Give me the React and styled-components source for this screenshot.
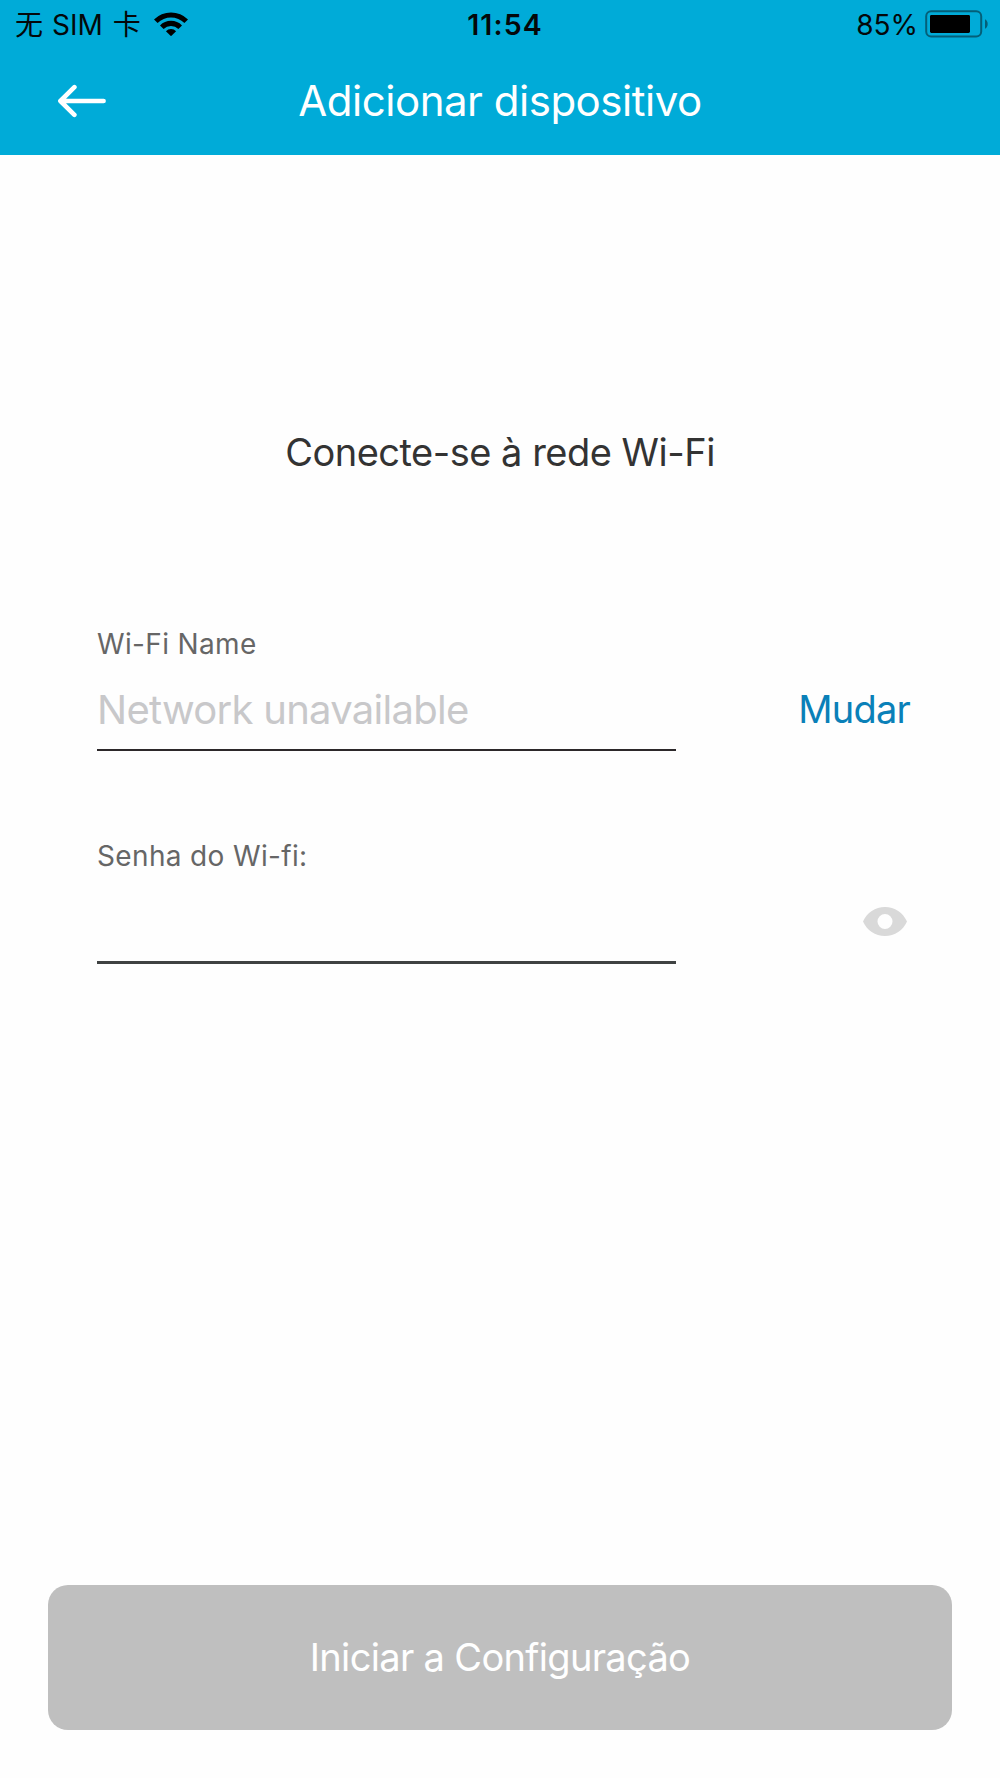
import styled, { createGlobalStyle } from 'styled-components';

export default function App() {
  return (
    <Screen>
      <GlobalStyle />
      <Header>
        <StatusBar>
          <Carrier>
            <Han>无</Han>
            <StatusText>SIM</StatusText>
            <Han>卡</Han>
            <WifiIcon />
          </Carrier>
          <Clock>11:54</Clock>
          <Power>
            <StatusText>85%</StatusText>
            <BatteryIcon />
          </Power>
        </StatusBar>
        <NavBar>
          <BackButton aria-label="Voltar">
            <ArrowIcon />
          </BackButton>
          <Title>Adicionar dispositivo</Title>
        </NavBar>
      </Header>
      <Content>
        <Heading>Conecte-se à rede Wi-Fi</Heading>
        <Field>
          <Label htmlFor="ssid">Wi-Fi Name</Label>
          <FieldRow $height={90}>
            <Input id="ssid" placeholder="Network unavailable" $line="2px solid #2c282a" />
            <ChangeButton>Mudar</ChangeButton>
          </FieldRow>
        </Field>
        <Field>
          <Label htmlFor="password">Senha do Wi-fi:</Label>
          <FieldRow $height={91}>
            <Input id="password" type="password" $line="3px solid #3f4242" />
            <EyeButton aria-label="Mostrar senha">
              <EyeIcon />
            </EyeButton>
          </FieldRow>
        </Field>
      </Content>
      <Footer>
        <SubmitButton>Iniciar a Configuração</SubmitButton>
      </Footer>
    </Screen>
  );
}

function WifiIcon() {
  return (
    <Wifi viewBox="0 0 34 24">
      <path d="M0 7.5A24 24 0 0 1 34 7.5L30.4 11.1A18.9 18.9 0 0 0 3.6 11.1Z" />
      <path d="M6 13.4A15.6 15.6 0 0 1 28 13.4L24.4 17A10.5 10.5 0 0 0 9.6 17Z" />
      <path d="M11.9 19.2A7.2 7.2 0 0 1 22.1 19.2L17 24.2Z" />
    </Wifi>
  );
}

function BatteryIcon() {
  return (
    <Battery viewBox="0 0 64 28">
      <rect x="1.2" y="1.2" width="55" height="25.4" rx="5" fill="none" stroke="#045f78" strokeWidth="2" />
      <rect x="5" y="5" width="40" height="18" rx="1.4" />
      <path d="M60 9.3C63.6 10.8 63.6 17.2 60 18.7Z" fill="#045f78" />
    </Battery>
  );
}

function ArrowIcon() {
  return (
    <Arrow viewBox="0 0 50 34">
      <path d="M17.4 3.2L3.4 17L17.4 30.8M3.4 17H46.6" />
    </Arrow>
  );
}

function EyeIcon() {
  return (
    <Eye viewBox="0 0 44 29">
      <path
        fillRule="evenodd"
        d="M0 14.5C3.8 5.8 12.3 0 22 0S40.2 5.8 44 14.5C40.2 23.2 31.7 29 22 29S3.8 23.2 0 14.5ZM22 7A7.5 7.5 0 1 0 22 22A7.5 7.5 0 1 0 22 7Z"
      />
    </Eye>
  );
}

const GlobalStyle = createGlobalStyle`
  body {
    margin: 0;
    background: #fefefe;
  }

  * {
    box-sizing: border-box;
  }

  button, input {
    font-family: inherit;
    font-weight: inherit;
    border: none;
    padding: 0;
    background: none;
  }
`;

const Screen = styled.div`
  display: flex;
  flex-direction: column;
  width: 1000px;
  height: 1778px;
  background: #fefefe;
  font-family: Inter, 'Noto Sans CJK SC', sans-serif;
  font-weight: 370;
  overflow: hidden;
`;

const Header = styled.header`
  height: 155px;
  background: #00abd8;
`;

const StatusBar = styled.div`
  display: grid;
  grid-template-columns: 1fr auto 1fr;
  align-items: center;
  height: 50px;
  padding: 0 11px 0 15px;
  color: #04080a;
`;

const Carrier = styled.div`
  display: flex;
  align-items: center;
`;

const StatusText = styled.span`
  font-size: 28px;
  font-weight: 400;
  line-height: 50px;
`;

const Han = styled.span`
  padding-bottom: 3px;
  font-family: 'Noto Sans CJK SC', sans-serif;
  font-size: 28px;
  font-weight: 400;
  line-height: 47px;

  & + span {
    margin: 0 10px 0 9px;
  }
`;

const Clock = styled.span`
  padding-left: 6px;
  font-size: 28.5px;
  font-weight: 600;
  letter-spacing: 1.1px;
  line-height: 50px;
`;

const Power = styled.div`
  display: flex;
  align-items: center;
  justify-content: flex-end;
  gap: 7px;
`;

const Wifi = styled.svg`
  width: 34px;
  height: 24px;
  margin: -2px 0 0 13px;
`;

const Battery = styled.svg`
  width: 64px;
  height: 28px;
  margin-top: -2px;
`;

const NavBar = styled.div`
  display: grid;
  grid-template-columns: 160px 1fr 160px;
  align-items: center;
  height: 102px;
`;

const BackButton = styled.button`
  display: flex;
  padding-left: 57px;
`;

const Arrow = styled.svg`
  width: 50px;
  height: 34px;
  fill: none;
  stroke: #fff;
  stroke-width: 4.6px;
  stroke-linecap: round;
  stroke-linejoin: round;
`;

const Title = styled.h1`
  margin: 0;
  color: #fff;
  font-size: 42px;
  font-weight: inherit;
  line-height: 50px;
  letter-spacing: -0.48px;
  text-align: center;
  white-space: nowrap;
`;

const Content = styled.main`
  flex: 1;
  padding: 272px 90px 0 97px;
`;

const Heading = styled.h2`
  margin: 0 7px 150px 0;
  color: #333;
  font-size: 38px;
  font-weight: inherit;
  line-height: 50px;
  letter-spacing: -0.5px;
  text-align: center;
`;

const Field = styled.div`
  height: 212px;
`;

const Label = styled.label`
  display: block;
  color: #666;
  font-size: 28px;
  font-weight: 400;
  line-height: 34px;
  letter-spacing: 0.35px;
`;

const FieldRow = styled.div`
  display: flex;
  justify-content: space-between;
  align-items: center;
  height: ${(props) => props.$height}px;
`;

const Input = styled.input`
  width: 579px;
  height: 100%;
  padding-top: 8px;
  border-bottom: ${(props) => props.$line};
  border-radius: 0;
  color: #333;
  font-size: 40px;
  letter-spacing: -0.72px;
  outline: none;

  &::placeholder {
    color: #c8c8ca;
    opacity: 1;
  }
`;

const ChangeButton = styled.button`
  padding-top: 6px;
  color: #0a80b8;
  font-size: 38px;
  line-height: 50px;
  letter-spacing: -0.8px;
`;

const EyeButton = styled.button`
  display: flex;
  padding-top: 6px;
  margin-right: 3px;
`;

const Eye = styled.svg`
  width: 44px;
  height: 29px;
  fill: #d9d9d9;
`;

const Footer = styled.footer`
  padding: 0 48px 48.5px;
`;

const SubmitButton = styled.button`
  width: 904px;
  height: 145px;
  border-radius: 20px;
  background: #bfbfbf;
  color: #fff;
  font-size: 38px;
  line-height: 50px;
  letter-spacing: -0.66px;
`;
